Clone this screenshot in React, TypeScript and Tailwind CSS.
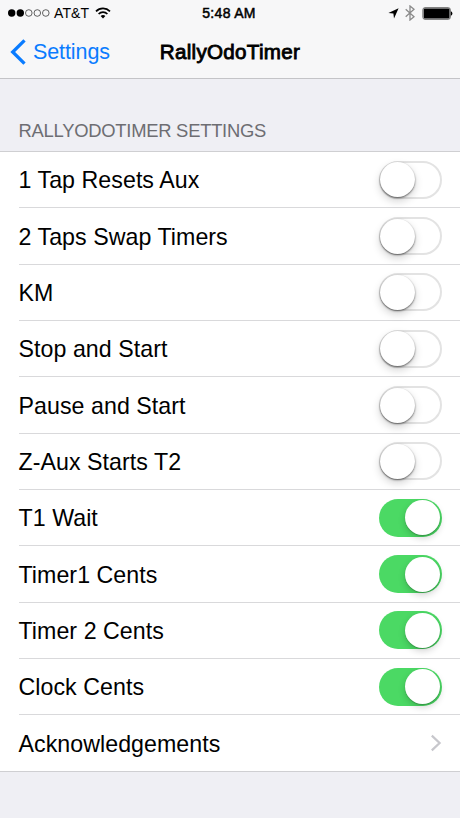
import { useState } from 'react';

type Setting = {
  label: string;
  on?: boolean;
  link?: boolean;
};

const settings: Setting[] = [
  { label: '1 Tap Resets Aux', on: false },
  { label: '2 Taps Swap Timers', on: false },
  { label: 'KM', on: false },
  { label: 'Stop and Start', on: false },
  { label: 'Pause and Start', on: false },
  { label: 'Z-Aux Starts T2', on: false },
  { label: 'T1 Wait', on: true },
  { label: 'Timer1 Cents', on: true },
  { label: 'Timer 2 Cents', on: true },
  { label: 'Clock Cents', on: true },
  { label: 'Acknowledgements', link: true },
];

function StatusBar() {
  return (
    <div className="flex h-[26px] items-center justify-between pl-2 pr-[7px] text-[13.5px] leading-none">
      <div className="flex w-[150px] items-center">
        <svg width="42" height="8" viewBox="0 0 42 8">
          <circle cx="3.7" cy="4" r="3.7" />
          <circle cx="12.3" cy="4" r="3.7" />
          <circle cx="20.8" cy="4" r="3.3" fill="none" stroke="#222" strokeWidth="0.7" />
          <circle cx="29.3" cy="4" r="3.3" fill="none" stroke="#222" strokeWidth="0.7" />
          <circle cx="37.8" cy="4" r="3.3" fill="none" stroke="#222" strokeWidth="0.7" />
        </svg>
        <span className="ml-1 text-[14px] tracking-[0.1px]">AT&amp;T</span>
        {/* Wifi */}
        <svg className="ml-[6px]" width="16" height="12" viewBox="0 0 16 12" fill="none" stroke="#000">
          <path d="M1 4.3a10 10 0 0 1 14 0" strokeWidth="1.7" />
          <path d="M3.6 7a6.3 6.3 0 0 1 8.8 0" strokeWidth="1.7" />
          <path d="M8 11.5L5.6 9.1a3.4 3.4 0 0 1 4.8 0z" fill="#000" stroke="none" />
        </svg>
      </div>
      <span className="mr-[3px] text-[14px] tracking-[0.3px] [-webkit-text-stroke:0.5px_#000]">5:48 AM</span>
      <div className="flex w-[150px] items-center justify-end">
        {/* Location */}
        <svg width="11" height="11" viewBox="0 0 11 11">
          <path d="M10.6 0.3L6 10.5L5.4 5.6L0.4 5z" />
        </svg>
        {/* Bluetooth */}
        <svg className="ml-[6px]" width="10" height="16" viewBox="0 0 10 16" fill="none" stroke="#8a8a8a" strokeWidth="1.3">
          <path d="M0.7 4.3L9 11.7L5 15V1L9 4.3L0.7 11.7" />
        </svg>
        {/* Battery */}
        <svg className="ml-[7px]" width="31" height="13" viewBox="0 0 31 13">
          <rect x="0.9" y="0.7" width="27.4" height="11.6" rx="2" fill="none" stroke="#666" strokeWidth="1" />
          <rect x="1.7" y="1.5" width="25.8" height="10" rx="1" />
          <path d="M28.8 4.3q1.6.5 1.6 2.2t-1.6 2.2z" />
        </svg>
      </div>
    </div>
  );
}

function NavBar() {
  return (
    <div className="grid h-[52px] grid-cols-[1fr_auto_1fr] items-center">
      <button className="flex items-center pl-[10px] text-[21.5px] text-[#0a7cff]">
        <svg width="16" height="26" viewBox="0 0 16 26" fill="none" stroke="currentColor" strokeWidth="3.3">
          <path d="M14.5 1.3L2.7 13L14.5 24.7" />
        </svg>
        <span className="ml-[7px] tracking-[-0.1px]">Settings</span>
      </button>
      <h1 className="text-[20.6px] tracking-[0.3px] [-webkit-text-stroke:0.85px_#000]">RallyOdoTimer</h1>
    </div>
  );
}

function Toggle({ label, on, onChange }: { label: string; on: boolean; onChange: () => void }) {
  return (
    <button
      role="switch"
      aria-label={label}
      aria-checked={on}
      onClick={onChange}
      className={`flex h-[38px] w-[63px] items-center rounded-full ${
        on ? 'justify-end bg-[#4bd964] px-[1.5px]' : 'border-2 border-[#e3e3e3] bg-white'
      }`}
    >
      <span
        className={`size-[35px] shrink-0 rounded-full bg-white ${
          on
            ? 'shadow-[0_3px_7px_rgba(0,0,0,0.18),0_1px_1px_rgba(0,0,0,0.2)]'
            : '-ml-px shadow-[0_4px_8px_rgba(0,0,0,0.18),0_1px_2px_rgba(0,0,0,0.55)]'
        }`}
      />
    </button>
  );
}

export default function App() {
  const [values, setValues] = useState(settings.map((s) => !!s.on));

  const toggle = (index: number) => setValues(values.map((v, i) => (i === index ? !v : v)));

  return (
    <div className="h-[818px] w-[460px] overflow-hidden bg-[#efeff4] font-['Liberation_Sans',Arial,sans-serif] text-black">
      <header className="h-[79px] border-b border-[#c4c4c7] bg-[#f7f7f8]">
        <StatusBar />
        <NavBar />
      </header>

      <h2 className="flex h-[72px] items-end pb-[9px] pl-[18.5px] text-[18.4px] leading-[22px] tracking-[-0.25px] text-[#6d6d72]">
        RALLYODOTIMER SETTINGS
      </h2>

      <ul className="border-y border-[#cfcfd2] bg-white pl-[18.5px]">
        {settings.map((setting, i) => (
          <li
            key={setting.label}
            className="flex h-[56.35px] items-center justify-between border-b border-[#d9d9db] pr-[18.5px] text-[23.2px] tracking-[0.05px] last:h-[56px] last:border-b-0"
          >
            <span className="pt-0.5">{setting.label}</span>
            {setting.link ? (
              <svg width="12" height="18" viewBox="0 0 12 18" fill="none" stroke="#c7c7cc" strokeWidth="2.2">
                <path d="M1.8 1.6L9.6 9L1.8 16.4" />
              </svg>
            ) : (
              <Toggle label={setting.label} on={values[i]} onChange={() => toggle(i)} />
            )}
          </li>
        ))}
      </ul>
    </div>
  );
}
